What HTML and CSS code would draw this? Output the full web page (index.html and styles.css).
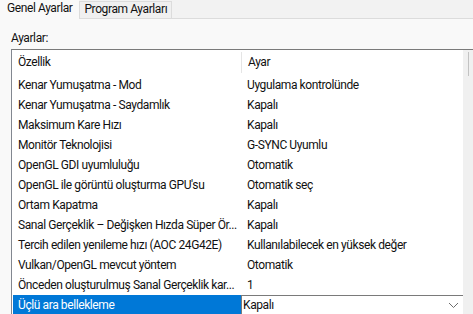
FILE: index.html
```html
<!DOCTYPE html>
<html lang="tr">
<head>
  <meta charset="utf-8" />
  <title>Ayarlar</title>
  <link rel="stylesheet" href="styles.css">
</head>
<body>
  <div class="tabs">
    <div class="tab active">Genel Ayarlar</div>
    <div class="tab">Program Ayarları</div>
  </div>

  <div class="panel">
    <p class="label">Ayarlar:</p>

    <div class="listbox">
      <div class="list">
        <div class="row head">
          <div class="cell">Özellik</div>
          <div class="cell sep">Ayar</div>
        </div>
        <div class="row"><div class="cell">Kenar Yumuşatma - Mod</div><div class="cell">Uygulama kontrolünde</div></div>
        <div class="row"><div class="cell">Kenar Yumuşatma - Saydamlık</div><div class="cell">Kapalı</div></div>
        <div class="row"><div class="cell">Maksimum Kare Hızı</div><div class="cell">Kapalı</div></div>
        <div class="row"><div class="cell">Monitör Teknolojisi</div><div class="cell">G-SYNC Uyumlu</div></div>
        <div class="row"><div class="cell">OpenGL GDI uyumluluğu</div><div class="cell">Otomatik</div></div>
        <div class="row"><div class="cell">OpenGL ile görüntü oluşturma GPU'su</div><div class="cell">Otomatik seç</div></div>
        <div class="row"><div class="cell">Ortam Kapatma</div><div class="cell">Kapalı</div></div>
        <div class="row"><div class="cell">Sanal Gerçeklik – Değişken Hızda Süper Ör...</div><div class="cell">Kapalı</div></div>
        <div class="row"><div class="cell">Tercih edilen yenileme hızı (AOC 24G42E)</div><div class="cell">Kullanılabilecek en yüksek değer</div></div>
        <div class="row"><div class="cell">Vulkan/OpenGL mevcut yöntem</div><div class="cell">Otomatik</div></div>
        <div class="row"><div class="cell">Önceden oluşturulmuş Sanal Gerçeklik kar...</div><div class="cell">1</div></div>
        <div class="row selected">
          <div class="cell">Üçlü ara bellekleme</div>
          <div class="cell combo">
            <span>Kapalı</span>
            <svg width="11" height="7" viewBox="0 0 11 7"><path d="M1 1 L5.5 5.5 L10 1" fill="none" stroke="#6d6d6d" stroke-width="1"/></svg>
          </div>
        </div>
      </div>
      <div class="scrollbar"><div class="thumb"></div></div>
    </div>
  </div>
</body>
</html>
```

FILE: styles.css
```css
* {
    margin: 0;
    padding: 0;
    box-sizing: border-box;
}

body {
    font-family: "Roboto", sans-serif;
    font-size: 12px;
    letter-spacing: -0.4px;
    color: #111111;
    background-color: #f9f9f9;
    overflow: hidden;
}

.tabs {
    display: flex;
    align-items: flex-end;
    height: 19px;
    background-color: #f2f2f2;
    border-bottom: 1px solid #dcdcdc;
}

.tab {
    height: 17px;
    line-height: 15px;
    padding: 0 4px;
    background-color: #f0f0f0;
    border: 1px solid #dcdcdc;
    border-bottom: none;
}

.tab.active {
    height: 20px;
    line-height: 17px;
    margin-bottom: -1px;
    padding: 0 6px 0 6px;
    background-color: #f9f9f9;
    border-color: #f9f9f9;
}

.panel {
    padding: 10px 0 0 11px;
}

.label {
    height: 20px;
    line-height: 18px;
}

.listbox {
    display: flex;
    background-color: #ffffff;
    border-top: 1px solid #7a7a7a;
    border-left: 1px solid #828790;
}

.list {
    flex: 1;
}

.row {
    display: grid;
    grid-template-columns: 229px 1fr;
    height: 20px;
    line-height: 20px;
}

.row.head {
    height: 25px;
    line-height: 25px;
}

.cell {
    padding-left: 6px;
    white-space: nowrap;
    overflow: hidden;
    text-overflow: ellipsis;
}

.sep {
    border-left: 1px solid #e5e5e5;
    margin: 2px 0 2px;
    line-height: 21px;
}

.selected .cell:first-child {
    background-color: #0078d7;
    color: #ffffff;
    margin-left: 1px;
    padding-left: 5px;
}

.combo {
    display: flex;
    justify-content: space-between;
    align-items: center;
    border-top: 1px solid #7a7a7a;
    border-left: 1px solid #7a7a7a;
    padding: 0 4px 0 1px;
    line-height: 19px;
}

.scrollbar {
    width: 10px;
    background-color: #f0f0f0;
    padding: 2px 0 0 5px;
}

.thumb {
    width: 1px;
    height: 24px;
    background-color: #c2c2c2;
}
```
